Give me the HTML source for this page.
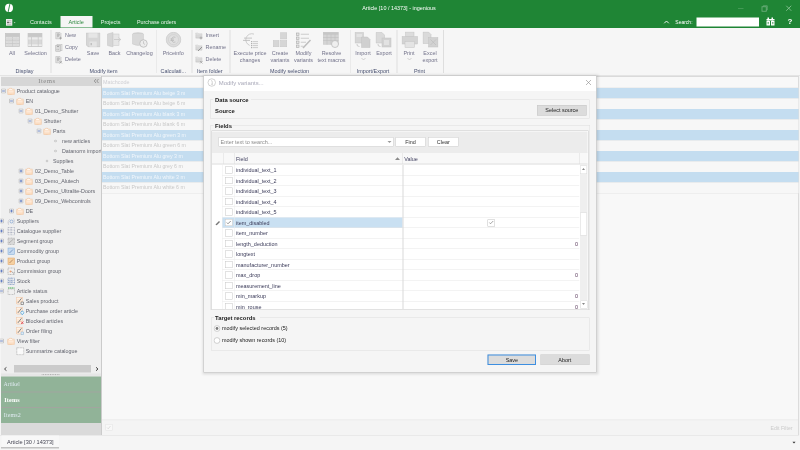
<!DOCTYPE html><html><head><meta charset="utf-8"><style>
html,body{margin:0;padding:0;width:800px;height:450px;overflow:hidden;background:#f5f5f5}
#root{position:absolute;left:0;top:0;width:1600px;height:900px;transform:scale(0.5);transform-origin:0 0;background:#f5f5f5;overflow:hidden;font-family:"Liberation Sans",sans-serif}
#root div{position:absolute;box-sizing:border-box}
.t{white-space:nowrap}
</style></head><body><div id="root">
<div style="left:0px;top:0px;width:1600px;height:55.5px;background:#1f8535"></div>
<svg style="position:absolute;left:7px;top:5px" width="22" height="22" viewBox="0 0 22 22"><ellipse cx="11" cy="10.8" rx="8" ry="8.3" fill="#fff"/><path d="M13 2 L9 20" stroke="#1f8535" stroke-width="1.8"/></svg>
<div class="t" style="left:598px;width:400px;text-align:center;top:9.06px;font-size:10.9px;line-height:13.08px;color:#fff;font-weight:400;">Article [10 / 14373] - ingenious</div>
<div style="left:1476px;top:15.6px;width:11px;height:1.8px;background:#68ad77"></div>
<svg style="position:absolute;left:1520px;top:8px" width="18" height="18" viewBox="0 0 18 18"><rect x="4" y="5.5" width="8.5" height="9" fill="none" stroke="#6fb07e" stroke-width="1.7"/><path d="M6.5 5.5 V3.5 H14.5 V12 H12.5" fill="none" stroke="#6fb07e" stroke-width="1.4"/></svg>
<svg style="position:absolute;left:1569px;top:8px" width="18" height="18" viewBox="0 0 18 18"><path d="M3.5 3.5 L13.5 13.5 M13.5 3.5 L3.5 13.5" stroke="#8cc497" stroke-width="1.7"/></svg>
<svg style="position:absolute;left:8px;top:34px" width="24" height="20" viewBox="0 0 24 20"><rect x="4" y="4" width="12.6" height="13.4" fill="#ececec"/><path d="M6 7.5 H14.5 M6 11 H14.5 M6 14.5 H14.5" stroke="#9a9a9a" stroke-width="1.2"/><rect x="6" y="9.6" width="4" height="2.6" fill="#6a6a6a"/><path d="M19.5 10.5 H23 L21.25 12.5 Z" fill="#dfe8e0"/></svg>
<div class="t" style="left:60px;top:37.40px;font-size:11.0px;line-height:13.20px;color:#e8f3ea;font-weight:400;">Contacts</div>
<div style="left:121px;top:32px;width:64px;height:23px;background:#f5f5f5"></div>
<div class="t" style="left:137px;top:37.40px;font-size:11.0px;line-height:13.20px;color:#2f8a40;font-weight:400;">Article</div>
<div class="t" style="left:201.5px;top:37.40px;font-size:11.0px;line-height:13.20px;color:#e8f3ea;font-weight:400;">Projects</div>
<div class="t" style="left:274px;top:37.58px;font-size:10.7px;line-height:12.84px;color:#e8f3ea;font-weight:400;">Purchase orders</div>
<svg style="position:absolute;left:1326px;top:38px" width="14" height="12" viewBox="0 0 14 12"><path d="M2.5 8.5 L7 4 L11.5 8.5" fill="none" stroke="#fff" stroke-width="1.8"/></svg>
<div class="t" style="left:1350.6px;top:38.00px;font-size:10.0px;line-height:12.00px;color:#fff;font-weight:400;">Search:</div>
<div style="left:1393px;top:34.6px;width:124.6px;height:18.6px;background:#fff"></div>
<svg style="position:absolute;left:1532px;top:34px" width="20" height="18" viewBox="0 0 20 18"><g fill="#fff"><rect x="3" y="1" width="3" height="6"/><rect x="11" y="1" width="3" height="6"/><rect x="1" y="4" width="16" height="3"/><rect x="1" y="8" width="7" height="9"/><rect x="10" y="8" width="7" height="9"/></g><g fill="#1f8535"><rect x="3" y="10" width="3" height="1.2"/><rect x="12" y="10" width="3" height="1.2"/><rect x="3" y="13" width="3" height="1.2"/><rect x="12" y="13" width="3" height="1.2"/><rect x="8" y="2" width="1" height="2"/></g></svg>
<div class="t" style="left:1575px;top:33.40px;font-size:16px;line-height:19.20px;color:#fff;font-weight:700;">?</div>
<div style="left:0px;top:55.5px;width:1600px;height:96.5px;background:#f6f6f6"></div>
<div style="left:0px;top:150.6px;width:1600px;height:2.2px;background:#d2d2d2"></div>
<div style="left:101px;top:60px;width:1.6px;height:86px;background:#dedede"></div>
<div style="left:312.5px;top:60px;width:1.6px;height:86px;background:#dedede"></div>
<div style="left:383px;top:60px;width:1.6px;height:86px;background:#dedede"></div>
<div style="left:459px;top:60px;width:1.6px;height:86px;background:#dedede"></div>
<div style="left:700.5px;top:60px;width:1.6px;height:86px;background:#dedede"></div>
<div style="left:793px;top:60px;width:1.6px;height:86px;background:#dedede"></div>
<div style="left:886px;top:60px;width:1.6px;height:86px;background:#dedede"></div>
<svg style="position:absolute;left:10px;top:65.6px" width="30" height="28" viewBox="0 0 30 28"><rect x="0.8" y="0.8" width="28.4" height="26.4" fill="#dedede" stroke="#c2c2c2" stroke-width="1.4"/><rect x="0.8" y="0.8" width="28.4" height="7" fill="#c8c8c8"/><path d="M15 8 V27 M1 14.5 H29 M1 21 H29" stroke="#c6c6c6" stroke-width="1.4"/><path d="M7.5 8 V27 M22.5 8 V27 M1 11 H29 M1 17.5 H29 M1 24 H29" stroke="#d6d6d6" stroke-width="1"/></svg>
<svg style="position:absolute;left:55.4px;top:65.6px" width="30" height="28" viewBox="0 0 30 28"><rect x="0.8" y="0.8" width="28.4" height="26.4" fill="#dcdcdc" stroke="#c2c2c2" stroke-width="1.4"/><rect x="0.8" y="0.8" width="28.4" height="7" fill="#c8c8c8"/><rect x="1.5" y="9" width="27" height="4" fill="#ececec"/><rect x="1.5" y="22.5" width="27" height="3.5" fill="#ececec"/><path d="M8 8 V27 M21.5 8 V27" stroke="#c6c6c6" stroke-width="1.4"/><path d="M1 14.5 H29 M1 18 H29 M1 21.5 H29" stroke="#d0d0d0" stroke-width="1"/></svg>
<div class="t" style="left:-176px;width:400px;text-align:center;top:100.46px;font-size:10.9px;line-height:13.08px;color:#72728a;font-weight:400;">All</div>
<div class="t" style="left:-129px;width:400px;text-align:center;top:100.46px;font-size:10.9px;line-height:13.08px;color:#72728a;font-weight:400;">Selection</div>
<div class="t" style="left:-151px;width:400px;text-align:center;top:136.46px;font-size:10.9px;line-height:13.08px;color:#485070;font-weight:400;">Display</div>
<svg style="position:absolute;left:110px;top:63px" width="16" height="17" viewBox="0 0 16 17"><path d="M1.5 2 H10 L12 4 V14.5 H1.5 Z" fill="#e2e2e2" stroke="#b4b4b4"/><path d="M4 4 Q8 2 10 6 L8 10 L5 12 Q3 9 4 4Z" fill="#bcbcbc"/><path d="M11 10.5 V16 M8.5 13.2 H14" stroke="#999" stroke-width="1.3"/></svg>
<div class="t" style="left:130px;top:64.46px;font-size:10.9px;line-height:13.08px;color:#72728a;font-weight:400;">New</div>
<svg style="position:absolute;left:110px;top:87px" width="16" height="17" viewBox="0 0 16 17"><rect x="4" y="1.5" width="10" height="13" fill="#e6e6e6" stroke="#bababa"/><rect x="1.5" y="3.5" width="9" height="12" fill="#dadada" stroke="#b0b0b0"/><path d="M4 6 H8 M3.5 12 H4.5 M7 12 H8" stroke="#8a8a8a" stroke-width="1.2"/></svg>
<div class="t" style="left:130px;top:88.46px;font-size:10.9px;line-height:13.08px;color:#72728a;font-weight:400;">Copy</div>
<svg style="position:absolute;left:110px;top:111px" width="16" height="17" viewBox="0 0 16 17"><path d="M1.5 2 H10 L12 4 V14.5 H1.5 Z" fill="#e2e2e2" stroke="#b4b4b4"/><path d="M4 4 Q8 2 10 6 L8 10 L5 12 Q3 9 4 4Z" fill="#bcbcbc"/><path d="M9 11 L14 16 M14 11 L9 16" stroke="#999" stroke-width="1.2"/></svg>
<div class="t" style="left:130px;top:112.46px;font-size:10.9px;line-height:13.08px;color:#72728a;font-weight:400;">Delete</div>
<svg style="position:absolute;left:172px;top:65px" width="29" height="30" viewBox="0 0 29 30"><path d="M0.8 0.8 H27.8 V28.8 H4.5 L0.8 25 Z" fill="#d6d6d6" stroke="#c6c6c6" stroke-width="1.4"/><rect x="5" y="1.5" width="18" height="9" fill="#e6e6e6"/><rect x="7" y="18" width="14.5" height="10.5" fill="#e4e4e4"/><rect x="9" y="21" width="3" height="4.5" fill="#c0c0c0"/></svg>
<div class="t" style="left:-14px;width:400px;text-align:center;top:100.46px;font-size:10.9px;line-height:13.08px;color:#72728a;font-weight:400;">Save</div>
<svg style="position:absolute;left:213px;top:64px" width="32" height="31" viewBox="0 0 32 31"><path d="M2 4 L13 1 V30 L2 27 Z" fill="#d6d6d6" stroke="#c4c4c4"/><rect x="13" y="4" width="12" height="23" fill="#e6e6e6" stroke="#c8c8c8"/><path d="M15 15 H28 M24 11 L28.5 15 L24 19" fill="none" stroke="#c0c0c0" stroke-width="1.3"/></svg>
<div class="t" style="left:29px;width:400px;text-align:center;top:100.46px;font-size:10.9px;line-height:13.08px;color:#72728a;font-weight:400;">Back</div>
<svg style="position:absolute;left:264px;top:64px" width="33" height="32" viewBox="0 0 33 32"><ellipse cx="12" cy="4" rx="11" ry="3.5" fill="#d0d0d0"/><path d="M1 4 V24 Q12 30 23 24 V4" fill="#d9d9d9" stroke="#c8c8c8"/><circle cx="23" cy="23" r="7.5" fill="#ececec" stroke="#b4b4b4" stroke-width="1.4"/><path d="M23 18.5 V23 L26 25" fill="none" stroke="#b0b0b0" stroke-width="1.2"/></svg>
<div class="t" style="left:79px;width:400px;text-align:center;top:100.46px;font-size:10.9px;line-height:13.08px;color:#72728a;font-weight:400;">Changelog</div>
<div class="t" style="left:7px;width:400px;text-align:center;top:136.46px;font-size:10.9px;line-height:13.08px;color:#485070;font-weight:400;">Modify item</div>
<svg style="position:absolute;left:331px;top:63px" width="32" height="33" viewBox="0 0 32 33"><circle cx="16" cy="16.3" r="14.6" fill="#dcdcdc" stroke="#c9c9c9" stroke-width="1.4"/><circle cx="16" cy="16.3" r="10" fill="#e0e0e0" stroke="#cdcdcd" stroke-width="1.2"/><path d="M20 11.5 Q14.5 9 12.5 14 V18.5 Q14.5 23.5 20 21 M10 15 H17 M10 18 H17" fill="none" stroke="#b8b8b8" stroke-width="1.5"/></svg>
<div class="t" style="left:146.5px;width:400px;text-align:center;top:100.46px;font-size:10.9px;line-height:13.08px;color:#72728a;font-weight:400;">Priceinfo</div>
<div class="t" style="left:146.5px;width:400px;text-align:center;top:136.46px;font-size:10.9px;line-height:13.08px;color:#485070;font-weight:400;">Calculati...</div>
<svg style="position:absolute;left:390px;top:63px" width="16" height="17" viewBox="0 0 16 17"><path d="M1.5 3 H6 L7.5 4.5 H14 V13.5 H1.5 Z" fill="#e8e8e8" stroke="#b8b8b8" stroke-dasharray="1.5 0.7"/><path d="M2 7 H13.5 M2 9.5 H13.5 M2 12 H13.5" stroke="#c0c0c0" stroke-width="1.1"/><path d="M12 10 V16 M9 13 H15" stroke="#999" stroke-width="1.3"/></svg>
<div class="t" style="left:411px;top:64.46px;font-size:10.9px;line-height:13.08px;color:#72728a;font-weight:400;">Insert</div>
<svg style="position:absolute;left:390px;top:87px" width="16" height="17" viewBox="0 0 16 17"><path d="M1.5 3 H6 L7.5 4.5 H14 V13.5 H1.5 Z" fill="#e8e8e8" stroke="#b8b8b8" stroke-dasharray="1.5 0.7"/><path d="M2 7 H13.5 M2 9.5 H13.5 M2 12 H13.5" stroke="#c0c0c0" stroke-width="1.1"/><path d="M6 15 L14 7" stroke="#8a8a8a" stroke-width="1.8"/></svg>
<div class="t" style="left:411px;top:88.46px;font-size:10.9px;line-height:13.08px;color:#72728a;font-weight:400;">Rename</div>
<svg style="position:absolute;left:390px;top:111px" width="16" height="17" viewBox="0 0 16 17"><path d="M1.5 3 H6 L7.5 4.5 H14 V13.5 H1.5 Z" fill="#e8e8e8" stroke="#b8b8b8" stroke-dasharray="1.5 0.7"/><path d="M2 7 H13.5 M2 9.5 H13.5 M2 12 H13.5" stroke="#c0c0c0" stroke-width="1.1"/><path d="M10 11 L15 16 M15 11 L10 16" stroke="#999" stroke-width="1.2"/></svg>
<div class="t" style="left:411px;top:112.46px;font-size:10.9px;line-height:13.08px;color:#72728a;font-weight:400;">Delete</div>
<div class="t" style="left:219.5px;width:400px;text-align:center;top:136.46px;font-size:10.9px;line-height:13.08px;color:#485070;font-weight:400;">Item folder</div>
<svg style="position:absolute;left:484px;top:64px" width="34" height="34" viewBox="0 0 34 34"><path d="M24 4.2 A12 12 0 1 0 15.4 26.8" fill="none" stroke="#c2c2c2" stroke-width="1.6"/><path d="M4 12.2 H20 M2 16.8 H16" stroke="#b8b8b8" stroke-width="1.6"/><g fill="#b0b0b0"><rect x="18" y="18" width="2.4" height="2.4"/><rect x="18" y="22" width="2.4" height="2.4"/><rect x="18" y="26" width="2.4" height="2.4"/><rect x="18" y="30" width="2.4" height="2.4"/></g><path d="M21.5 19.2 H32 M21.5 23.2 H32 M21.5 27.2 H32 M21.5 31.2 H32" stroke="#c0c0c0" stroke-width="1.6"/></svg>
<div class="t" style="left:300px;width:400px;text-align:center;top:100.46px;font-size:10.9px;line-height:13.08px;color:#72728a;font-weight:400;">Execute price</div>
<div class="t" style="left:300px;width:400px;text-align:center;top:112.96px;font-size:10.9px;line-height:13.08px;color:#72728a;font-weight:400;">changes</div>
<svg style="position:absolute;left:545px;top:64px" width="30" height="31" viewBox="0 0 30 31"><g fill="#d6d6d6" stroke="#c6c6c6" stroke-width="1"><rect x="1.5" y="17" width="11.5" height="12.5"/><rect x="16" y="17" width="12.5" height="12.5"/><rect x="16" y="1.5" width="12.5" height="12.5"/></g></svg>
<div class="t" style="left:360px;width:400px;text-align:center;top:100.46px;font-size:10.9px;line-height:13.08px;color:#72728a;font-weight:400;">Create</div>
<div class="t" style="left:360px;width:400px;text-align:center;top:112.96px;font-size:10.9px;line-height:13.08px;color:#72728a;font-weight:400;">variants</div>
<svg style="position:absolute;left:591px;top:64px" width="32" height="34" viewBox="0 0 32 34"><g fill="#e4e4e4" stroke="#a8a8a8" stroke-width="1.2"><rect x="2" y="2" width="5" height="5"/><rect x="2" y="10" width="5" height="5"/><rect x="2" y="18" width="5" height="5"/><rect x="2" y="26" width="5" height="5"/></g><path d="M10.5 4.5 H27 M10.5 12.5 H27 M10.5 20.5 H21 M10.5 28.5 H16" stroke="#bdbdbd" stroke-width="1.5"/><path d="M15 32 L30 16" stroke="#bdbdbd" stroke-width="3"/></svg>
<div class="t" style="left:407px;width:400px;text-align:center;top:100.46px;font-size:10.9px;line-height:13.08px;color:#72728a;font-weight:400;">Modify</div>
<div class="t" style="left:407px;width:400px;text-align:center;top:112.96px;font-size:10.9px;line-height:13.08px;color:#72728a;font-weight:400;">variants</div>
<svg style="position:absolute;left:646px;top:64px" width="34" height="32" viewBox="0 0 34 32"><rect x="0.5" y="0.5" width="30" height="24" fill="#d4d4d4" stroke="#c6c6c6"/><rect x="0.5" y="0.5" width="30" height="5" fill="#c6c6c6"/><path d="M0 11 H31 M0 17 H31 M8 5 V25 M16 5 V25 M24 5 V25" stroke="#bdbdbd"/><circle cx="24" cy="24" r="7" fill="#efefef" stroke="#bdbdbd" stroke-width="1.6"/></svg>
<div class="t" style="left:463px;width:400px;text-align:center;top:100.46px;font-size:10.9px;line-height:13.08px;color:#72728a;font-weight:400;">Resolve</div>
<div class="t" style="left:463px;width:400px;text-align:center;top:112.96px;font-size:10.9px;line-height:13.08px;color:#72728a;font-weight:400;">text macros</div>
<div class="t" style="left:379px;width:400px;text-align:center;top:136.46px;font-size:10.9px;line-height:13.08px;color:#485070;font-weight:400;">Modify selection</div>
<svg style="position:absolute;left:709px;top:64px" width="33" height="32" viewBox="0 0 33 32"><rect x="1" y="1" width="17" height="21" fill="#d6d6d6" stroke="#c3c3c3"/><rect x="4" y="4" width="11" height="6" fill="#e4e4e4"/><path d="M14 10 H26 L31 15 V31 H14 Z" fill="#d0d0d0" stroke="#c3c3c3"/><path d="M5 24 Q4 29 10 29" fill="none" stroke="#b8b8b8" stroke-width="1.3"/></svg>
<div class="t" style="left:526px;width:400px;text-align:center;top:100.46px;font-size:10.9px;line-height:13.08px;color:#72728a;font-weight:400;">Import</div>
<svg style="position:absolute;left:722px;top:115px" width="10" height="6" viewBox="0 0 10 6"><path d="M1 1 L5 5 L9 1" fill="none" stroke="#b8b8b8" stroke-width="1.2"/></svg>
<svg style="position:absolute;left:751px;top:64px" width="33" height="32" viewBox="0 0 33 32"><path d="M1 1 H13 L18 6 V22 H1 Z" fill="#dadada" stroke="#c3c3c3"/><rect x="13" y="12" width="18" height="18" fill="#d2d2d2" stroke="#c3c3c3"/><rect x="17" y="16" width="10" height="10" fill="#e2e2e2"/><path d="M5 24 Q4 29 10 29" fill="none" stroke="#b8b8b8" stroke-width="1.3"/></svg>
<div class="t" style="left:568px;width:400px;text-align:center;top:100.46px;font-size:10.9px;line-height:13.08px;color:#72728a;font-weight:400;">Export</div>
<div class="t" style="left:546px;width:400px;text-align:center;top:136.46px;font-size:10.9px;line-height:13.08px;color:#485070;font-weight:400;">Import/Export</div>
<svg style="position:absolute;left:803px;top:63px" width="33" height="33" viewBox="0 0 33 33"><rect x="8" y="1" width="17" height="9" fill="#dcdcdc" stroke="#c3c3c3"/><rect x="1" y="10" width="31" height="15" fill="#d4d4d4" stroke="#c3c3c3"/><rect x="7" y="20" width="19" height="12" fill="#e4e4e4" stroke="#c3c3c3"/></svg>
<div class="t" style="left:618px;width:400px;text-align:center;top:100.46px;font-size:10.9px;line-height:13.08px;color:#72728a;font-weight:400;">Print</div>
<svg style="position:absolute;left:814px;top:115px" width="10" height="6" viewBox="0 0 10 6"><path d="M1 1 L5 5 L9 1" fill="none" stroke="#b8b8b8" stroke-width="1.2"/></svg>
<svg style="position:absolute;left:845px;top:63px" width="32" height="33" viewBox="0 0 32 33"><path d="M1 1 H12 L17 6 V24 H1 Z" fill="#dadada" stroke="#c3c3c3"/><rect x="12" y="12" width="19" height="19" fill="#d2d2d2" stroke="#c3c3c3"/><path d="M16 16 L27 27 M27 16 L16 27" stroke="#bdbdbd" stroke-width="1.3"/></svg>
<div class="t" style="left:660px;width:400px;text-align:center;top:100.46px;font-size:10.9px;line-height:13.08px;color:#72728a;font-weight:400;">Excel</div>
<div class="t" style="left:660px;width:400px;text-align:center;top:112.96px;font-size:10.9px;line-height:13.08px;color:#72728a;font-weight:400;">export</div>
<div class="t" style="left:639px;width:400px;text-align:center;top:136.46px;font-size:10.9px;line-height:13.08px;color:#485070;font-weight:400;">Print</div>
<div style="left:0px;top:152px;width:2px;height:718px;background:#f5f5f5"></div>
<div style="left:2px;top:152px;width:201px;height:718px;background:#efefef"></div>
<div style="left:2px;top:154px;width:201px;height:18px;background:#d6d6d6"></div>
<div class="t" style="left:-106px;width:400px;text-align:center;top:154.30px;font-size:13.5px;line-height:16.20px;color:#8a8a8a;font-weight:400;font-family:&quot;Liberation Serif&quot;,serif;letter-spacing:1px">Items</div>
<svg style="position:absolute;left:186px;top:155px" width="14" height="14" viewBox="0 0 14 14"><path d="M6 3 L2.5 7 L6 11 M11 3 L7.5 7 L11 11" fill="none" stroke="#6a6a6a" stroke-width="1.2"/></svg>
<svg style="position:absolute;left:2px;top:177px" width="10" height="10" viewBox="0 0 10 10"><rect x="0.75" y="0.75" width="8.5" height="8.5" rx="1.2" fill="#f2f2f2" stroke="#a4a4a4" stroke-width="1.2"/><path d="M2.2 5 H7.8" stroke="#4a68b8" stroke-width="1.5"/></svg>
<svg style="position:absolute;left:14px;top:175px" width="16" height="15" viewBox="0 0 16 15"><path d="M1.5 3.5 H4 L5.5 1.5 H9 L10.5 3.5 H14.5 V14 H1.5 Z" fill="#fff6ee" stroke="#f0ab72" stroke-width="1.3" stroke-dasharray="1.6 0.7"/><path d="M2 6.5 H14 M2 9.5 H14 M2 12 H14" stroke="#f8cda4" stroke-width="1.2"/></svg>
<div class="t" style="left:33.5px;top:175.58px;font-size:10.7px;line-height:12.84px;color:#62646e;font-weight:400;">Product catalogue</div>
<svg style="position:absolute;left:18px;top:197px" width="10" height="10" viewBox="0 0 10 10"><rect x="0.75" y="0.75" width="8.5" height="8.5" rx="1.2" fill="#f2f2f2" stroke="#a4a4a4" stroke-width="1.2"/><path d="M2.2 5 H7.8" stroke="#4a68b8" stroke-width="1.5"/></svg>
<svg style="position:absolute;left:32px;top:195px" width="16" height="15" viewBox="0 0 16 15"><path d="M1.5 3.5 H4 L5.5 1.5 H9 L10.5 3.5 H14.5 V14 H1.5 Z" fill="#fff6ee" stroke="#f0ab72" stroke-width="1.3" stroke-dasharray="1.6 0.7"/><path d="M2 6.5 H14 M2 9.5 H14 M2 12 H14" stroke="#f8cda4" stroke-width="1.2"/></svg>
<div class="t" style="left:51.5px;top:195.58px;font-size:10.7px;line-height:12.84px;color:#62646e;font-weight:400;">EN</div>
<svg style="position:absolute;left:37px;top:217px" width="10" height="10" viewBox="0 0 10 10"><rect x="0.75" y="0.75" width="8.5" height="8.5" rx="1.2" fill="#f2f2f2" stroke="#a4a4a4" stroke-width="1.2"/><path d="M2.2 5 H7.8" stroke="#4a68b8" stroke-width="1.5"/></svg>
<svg style="position:absolute;left:50px;top:215px" width="16" height="15" viewBox="0 0 16 15"><path d="M1.5 3.5 H4 L5.5 1.5 H9 L10.5 3.5 H14.5 V14 H1.5 Z" fill="#fff6ee" stroke="#f0ab72" stroke-width="1.3" stroke-dasharray="1.6 0.7"/><path d="M2 6.5 H14 M2 9.5 H14 M2 12 H14" stroke="#f8cda4" stroke-width="1.2"/></svg>
<div class="t" style="left:70px;top:215.58px;font-size:10.7px;line-height:12.84px;color:#62646e;font-weight:400;">01_Demo_Shutter</div>
<svg style="position:absolute;left:55px;top:237px" width="10" height="10" viewBox="0 0 10 10"><rect x="0.75" y="0.75" width="8.5" height="8.5" rx="1.2" fill="#f2f2f2" stroke="#a4a4a4" stroke-width="1.2"/><path d="M2.2 5 H7.8" stroke="#4a68b8" stroke-width="1.5"/></svg>
<svg style="position:absolute;left:68px;top:235px" width="16" height="15" viewBox="0 0 16 15"><path d="M1.5 3.5 H4 L5.5 1.5 H9 L10.5 3.5 H14.5 V14 H1.5 Z" fill="#fff6ee" stroke="#f0ab72" stroke-width="1.3" stroke-dasharray="1.6 0.7"/><path d="M2 6.5 H14 M2 9.5 H14 M2 12 H14" stroke="#f8cda4" stroke-width="1.2"/></svg>
<div class="t" style="left:88px;top:235.58px;font-size:10.7px;line-height:12.84px;color:#62646e;font-weight:400;">Shutter</div>
<svg style="position:absolute;left:73px;top:257px" width="10" height="10" viewBox="0 0 10 10"><rect x="0.75" y="0.75" width="8.5" height="8.5" rx="1.2" fill="#f2f2f2" stroke="#a4a4a4" stroke-width="1.2"/><path d="M2.2 5 H7.8" stroke="#4a68b8" stroke-width="1.5"/></svg>
<svg style="position:absolute;left:86px;top:255px" width="16" height="15" viewBox="0 0 16 15"><path d="M1.5 3.5 H4 L5.5 1.5 H9 L10.5 3.5 H14.5 V14 H1.5 Z" fill="#fff6ee" stroke="#f0ab72" stroke-width="1.3" stroke-dasharray="1.6 0.7"/><path d="M2 6.5 H14 M2 9.5 H14 M2 12 H14" stroke="#f8cda4" stroke-width="1.2"/></svg>
<div class="t" style="left:106px;top:255.58px;font-size:10.7px;line-height:12.84px;color:#62646e;font-weight:400;">Parts</div>
<svg style="position:absolute;left:108px;top:279px" width="6" height="6" viewBox="0 0 6 6"><circle cx="3" cy="3" r="2" fill="none" stroke="#a0a0a0" stroke-width="1"/></svg>
<div class="t" style="left:124px;top:275.58px;font-size:10.7px;line-height:12.84px;color:#62646e;font-weight:400;">new articles</div>
<svg style="position:absolute;left:108px;top:299px" width="6" height="6" viewBox="0 0 6 6"><circle cx="3" cy="3" r="2" fill="none" stroke="#a0a0a0" stroke-width="1"/></svg>
<div class="t" style="left:124px;top:295.58px;font-size:10.7px;line-height:12.84px;color:#62646e;font-weight:400;">Datanorm import</div>
<svg style="position:absolute;left:91px;top:319px" width="6" height="6" viewBox="0 0 6 6"><circle cx="3" cy="3" r="2" fill="none" stroke="#a0a0a0" stroke-width="1"/></svg>
<div class="t" style="left:106px;top:315.58px;font-size:10.7px;line-height:12.84px;color:#62646e;font-weight:400;">Supplies</div>
<svg style="position:absolute;left:37px;top:337px" width="10" height="10" viewBox="0 0 10 10"><rect x="0.75" y="0.75" width="8.5" height="8.5" rx="1.2" fill="#f2f2f2" stroke="#a4a4a4" stroke-width="1.2"/><path d="M2.2 5 H7.8" stroke="#4a68b8" stroke-width="1.5"/><path d="M5 2.2 V7.8" stroke="#4a68b8" stroke-width="1.5"/></svg>
<svg style="position:absolute;left:50px;top:335px" width="16" height="15" viewBox="0 0 16 15"><path d="M1.5 3.5 H4 L5.5 1.5 H9 L10.5 3.5 H14.5 V14 H1.5 Z" fill="#fff6ee" stroke="#f0ab72" stroke-width="1.3" stroke-dasharray="1.6 0.7"/><path d="M2 6.5 H14 M2 9.5 H14 M2 12 H14" stroke="#f8cda4" stroke-width="1.2"/></svg>
<div class="t" style="left:70px;top:335.58px;font-size:10.7px;line-height:12.84px;color:#62646e;font-weight:400;">02_Demo_Table</div>
<svg style="position:absolute;left:37px;top:357px" width="10" height="10" viewBox="0 0 10 10"><rect x="0.75" y="0.75" width="8.5" height="8.5" rx="1.2" fill="#f2f2f2" stroke="#a4a4a4" stroke-width="1.2"/><path d="M2.2 5 H7.8" stroke="#4a68b8" stroke-width="1.5"/><path d="M5 2.2 V7.8" stroke="#4a68b8" stroke-width="1.5"/></svg>
<svg style="position:absolute;left:50px;top:355px" width="16" height="15" viewBox="0 0 16 15"><path d="M1.5 3.5 H4 L5.5 1.5 H9 L10.5 3.5 H14.5 V14 H1.5 Z" fill="#fff6ee" stroke="#f0ab72" stroke-width="1.3" stroke-dasharray="1.6 0.7"/><path d="M2 6.5 H14 M2 9.5 H14 M2 12 H14" stroke="#f8cda4" stroke-width="1.2"/></svg>
<div class="t" style="left:70px;top:355.58px;font-size:10.7px;line-height:12.84px;color:#62646e;font-weight:400;">03_Demo_Alutech</div>
<svg style="position:absolute;left:37px;top:377px" width="10" height="10" viewBox="0 0 10 10"><rect x="0.75" y="0.75" width="8.5" height="8.5" rx="1.2" fill="#f2f2f2" stroke="#a4a4a4" stroke-width="1.2"/><path d="M2.2 5 H7.8" stroke="#4a68b8" stroke-width="1.5"/><path d="M5 2.2 V7.8" stroke="#4a68b8" stroke-width="1.5"/></svg>
<svg style="position:absolute;left:50px;top:375px" width="16" height="15" viewBox="0 0 16 15"><path d="M1.5 3.5 H4 L5.5 1.5 H9 L10.5 3.5 H14.5 V14 H1.5 Z" fill="#fff6ee" stroke="#f0ab72" stroke-width="1.3" stroke-dasharray="1.6 0.7"/><path d="M2 6.5 H14 M2 9.5 H14 M2 12 H14" stroke="#f8cda4" stroke-width="1.2"/></svg>
<div class="t" style="left:70px;top:375.58px;font-size:10.7px;line-height:12.84px;color:#62646e;font-weight:400;">04_Demo_Ultralite-Doors</div>
<svg style="position:absolute;left:37px;top:397px" width="10" height="10" viewBox="0 0 10 10"><rect x="0.75" y="0.75" width="8.5" height="8.5" rx="1.2" fill="#f2f2f2" stroke="#a4a4a4" stroke-width="1.2"/><path d="M2.2 5 H7.8" stroke="#4a68b8" stroke-width="1.5"/><path d="M5 2.2 V7.8" stroke="#4a68b8" stroke-width="1.5"/></svg>
<svg style="position:absolute;left:50px;top:395px" width="16" height="15" viewBox="0 0 16 15"><path d="M1.5 3.5 H4 L5.5 1.5 H9 L10.5 3.5 H14.5 V14 H1.5 Z" fill="#fff6ee" stroke="#f0ab72" stroke-width="1.3" stroke-dasharray="1.6 0.7"/><path d="M2 6.5 H14 M2 9.5 H14 M2 12 H14" stroke="#f8cda4" stroke-width="1.2"/></svg>
<div class="t" style="left:70px;top:395.58px;font-size:10.7px;line-height:12.84px;color:#62646e;font-weight:400;">09_Demo_Webcontrols</div>
<svg style="position:absolute;left:18px;top:417px" width="10" height="10" viewBox="0 0 10 10"><rect x="0.75" y="0.75" width="8.5" height="8.5" rx="1.2" fill="#f2f2f2" stroke="#a4a4a4" stroke-width="1.2"/><path d="M2.2 5 H7.8" stroke="#4a68b8" stroke-width="1.5"/><path d="M5 2.2 V7.8" stroke="#4a68b8" stroke-width="1.5"/></svg>
<svg style="position:absolute;left:32px;top:415px" width="16" height="15" viewBox="0 0 16 15"><path d="M1.5 3.5 H4 L5.5 1.5 H9 L10.5 3.5 H14.5 V14 H1.5 Z" fill="#fff6ee" stroke="#f0ab72" stroke-width="1.3" stroke-dasharray="1.6 0.7"/><path d="M2 6.5 H14 M2 9.5 H14 M2 12 H14" stroke="#f8cda4" stroke-width="1.2"/></svg>
<div class="t" style="left:51.5px;top:415.58px;font-size:10.7px;line-height:12.84px;color:#62646e;font-weight:400;">DE</div>
<svg style="position:absolute;left:-2px;top:437px" width="10" height="10" viewBox="0 0 10 10"><rect x="0.75" y="0.75" width="8.5" height="8.5" rx="1.2" fill="#f2f2f2" stroke="#a4a4a4" stroke-width="1.2"/><path d="M2.2 5 H7.8" stroke="#4a68b8" stroke-width="1.5"/><path d="M5 2.2 V7.8" stroke="#4a68b8" stroke-width="1.5"/></svg>
<svg style="position:absolute;left:14px;top:434px" width="17" height="17" viewBox="0 0 17 17"><path d="M3 15 Q1 8 5 5 M13 3 Q16 8 13 15" fill="none" stroke="#9aa0b0" stroke-width="1.2" stroke-dasharray="2 1"/><circle cx="9" cy="9" r="3" fill="none" stroke="#6a90c8" stroke-width="1.2"/></svg>
<div class="t" style="left:33.5px;top:435.58px;font-size:10.7px;line-height:12.84px;color:#62646e;font-weight:400;">Suppliers</div>
<svg style="position:absolute;left:-2px;top:457px" width="10" height="10" viewBox="0 0 10 10"><rect x="0.75" y="0.75" width="8.5" height="8.5" rx="1.2" fill="#f2f2f2" stroke="#a4a4a4" stroke-width="1.2"/><path d="M2.2 5 H7.8" stroke="#4a68b8" stroke-width="1.5"/><path d="M5 2.2 V7.8" stroke="#4a68b8" stroke-width="1.5"/></svg>
<svg style="position:absolute;left:14px;top:454px" width="17" height="17" viewBox="0 0 17 17"><g fill="none" stroke="#8a93a8" stroke-width="1" stroke-dasharray="2 1"><rect x="2" y="1" width="13" height="15"/><path d="M2 6 H15 M2 11 H15 M8 1 V16"/></g></svg>
<div class="t" style="left:33.5px;top:455.58px;font-size:10.7px;line-height:12.84px;color:#62646e;font-weight:400;">Catalogue supplier</div>
<svg style="position:absolute;left:-2px;top:477px" width="10" height="10" viewBox="0 0 10 10"><rect x="0.75" y="0.75" width="8.5" height="8.5" rx="1.2" fill="#f2f2f2" stroke="#a4a4a4" stroke-width="1.2"/><path d="M2.2 5 H7.8" stroke="#4a68b8" stroke-width="1.5"/><path d="M5 2.2 V7.8" stroke="#4a68b8" stroke-width="1.5"/></svg>
<svg style="position:absolute;left:14px;top:474px" width="17" height="17" viewBox="0 0 17 17"><g fill="#d8d8d8" stroke="#9a9a9a" stroke-width="1" stroke-dasharray="2 1"><rect x="2" y="2" width="13" height="13"/></g><path d="M4 12 L13 4" stroke="#888"/></svg>
<div class="t" style="left:33.5px;top:475.58px;font-size:10.7px;line-height:12.84px;color:#62646e;font-weight:400;">Segment group</div>
<svg style="position:absolute;left:-2px;top:497px" width="10" height="10" viewBox="0 0 10 10"><rect x="0.75" y="0.75" width="8.5" height="8.5" rx="1.2" fill="#f2f2f2" stroke="#a4a4a4" stroke-width="1.2"/><path d="M2.2 5 H7.8" stroke="#4a68b8" stroke-width="1.5"/><path d="M5 2.2 V7.8" stroke="#4a68b8" stroke-width="1.5"/></svg>
<svg style="position:absolute;left:14px;top:494px" width="17" height="17" viewBox="0 0 17 17"><rect x="2" y="2" width="13" height="13" fill="#c6daf0" stroke="#7aa8d8"/><path d="M5 12 L12 5" stroke="#4a70a8" stroke-width="1.2"/></svg>
<div class="t" style="left:33.5px;top:495.58px;font-size:10.7px;line-height:12.84px;color:#62646e;font-weight:400;">Commodity group</div>
<svg style="position:absolute;left:-2px;top:517px" width="10" height="10" viewBox="0 0 10 10"><rect x="0.75" y="0.75" width="8.5" height="8.5" rx="1.2" fill="#f2f2f2" stroke="#a4a4a4" stroke-width="1.2"/><path d="M2.2 5 H7.8" stroke="#4a68b8" stroke-width="1.5"/><path d="M5 2.2 V7.8" stroke="#4a68b8" stroke-width="1.5"/></svg>
<svg style="position:absolute;left:14px;top:514px" width="17" height="17" viewBox="0 0 17 17"><rect x="2" y="2" width="13" height="13" fill="#f5d0a0" stroke="#e0a060"/><path d="M5 12 L12 5" stroke="#906040" stroke-width="1.2"/></svg>
<div class="t" style="left:33.5px;top:515.58px;font-size:10.7px;line-height:12.84px;color:#62646e;font-weight:400;">Product group</div>
<svg style="position:absolute;left:-2px;top:537px" width="10" height="10" viewBox="0 0 10 10"><rect x="0.75" y="0.75" width="8.5" height="8.5" rx="1.2" fill="#f2f2f2" stroke="#a4a4a4" stroke-width="1.2"/><path d="M2.2 5 H7.8" stroke="#4a68b8" stroke-width="1.5"/><path d="M5 2.2 V7.8" stroke="#4a68b8" stroke-width="1.5"/></svg>
<svg style="position:absolute;left:14px;top:534px" width="17" height="17" viewBox="0 0 17 17"><g fill="none" stroke="#8a8a8a" stroke-width="1" stroke-dasharray="2 1"><rect x="2" y="2" width="13" height="13"/></g><circle cx="7" cy="9" r="2" fill="#f0a070"/><path d="M9 9 L14 13" stroke="#666"/></svg>
<div class="t" style="left:33.5px;top:535.58px;font-size:10.7px;line-height:12.84px;color:#62646e;font-weight:400;">Commission group</div>
<svg style="position:absolute;left:-2px;top:557px" width="10" height="10" viewBox="0 0 10 10"><rect x="0.75" y="0.75" width="8.5" height="8.5" rx="1.2" fill="#f2f2f2" stroke="#a4a4a4" stroke-width="1.2"/><path d="M2.2 5 H7.8" stroke="#4a68b8" stroke-width="1.5"/><path d="M5 2.2 V7.8" stroke="#4a68b8" stroke-width="1.5"/></svg>
<svg style="position:absolute;left:14px;top:554px" width="17" height="17" viewBox="0 0 17 17"><g fill="none" stroke="#5a7ab0" stroke-width="1" stroke-dasharray="2 1"><rect x="2" y="2" width="13" height="13"/><path d="M2 7 H15 M2 11 H15 M6 2 V15 M10 2 V15"/></g></svg>
<div class="t" style="left:33.5px;top:555.58px;font-size:10.7px;line-height:12.84px;color:#62646e;font-weight:400;">Stock</div>
<svg style="position:absolute;left:-2px;top:577px" width="10" height="10" viewBox="0 0 10 10"><rect x="0.75" y="0.75" width="8.5" height="8.5" rx="1.2" fill="#f2f2f2" stroke="#a4a4a4" stroke-width="1.2"/><path d="M2.2 5 H7.8" stroke="#4a68b8" stroke-width="1.5"/></svg>
<svg style="position:absolute;left:14px;top:574px" width="17" height="17" viewBox="0 0 17 17"><path d="M2 2 H15" stroke="#40b050" stroke-width="2" stroke-dasharray="3 1"/><g fill="none" stroke="#9a9a9a" stroke-width="1" stroke-dasharray="2 1"><rect x="2" y="4" width="13" height="11"/></g></svg>
<div class="t" style="left:33.5px;top:575.58px;font-size:10.7px;line-height:12.84px;color:#62646e;font-weight:400;">Article status</div>
<svg style="position:absolute;left:31px;top:593px" width="18" height="18" viewBox="0 0 18 18"><rect x="2" y="2" width="12" height="13" fill="#fdf1e6" stroke="#f0b080" stroke-width="1.2" stroke-dasharray="1.5 0.8"/><path d="M3 7 H13 M3 10 H13" stroke="#f6cfa8"/><path d="M4.5 13 L12 3.5" stroke="#7a7a7a" stroke-width="1.8"/><path d="M11 11 L16 11 L16 16 L11 16 Z" fill="#f0f0f0" stroke="#666" stroke-width="1.2"/></svg>
<div class="t" style="left:51.5px;top:595.58px;font-size:10.7px;line-height:12.84px;color:#62646e;font-weight:400;">Sales product</div>
<svg style="position:absolute;left:31px;top:613px" width="18" height="18" viewBox="0 0 18 18"><rect x="2" y="2" width="12" height="13" fill="#fdf1e6" stroke="#f0b080" stroke-width="1.2" stroke-dasharray="1.5 0.8"/><path d="M3 7 H13 M3 10 H13" stroke="#f6cfa8"/><path d="M4.5 13 L12 3.5" stroke="#7a7a7a" stroke-width="1.8"/><path d="M13.5 8.5 L17 12.5 L13.5 16.5 L10 12.5 Z" fill="#e8f4fc" stroke="#3a9ad8" stroke-width="1.4"/></svg>
<div class="t" style="left:51.5px;top:615.58px;font-size:10.7px;line-height:12.84px;color:#62646e;font-weight:400;">Purchase order article</div>
<svg style="position:absolute;left:31px;top:633px" width="18" height="18" viewBox="0 0 18 18"><rect x="2" y="2" width="12" height="13" fill="#fdf1e6" stroke="#f0b080" stroke-width="1.2" stroke-dasharray="1.5 0.8"/><path d="M3 7 H13 M3 10 H13" stroke="#f6cfa8"/><path d="M4.5 13 L12 3.5" stroke="#7a7a7a" stroke-width="1.8"/><path d="M11 10 L16 15 M16 10 L11 15" stroke="#e04858" stroke-width="1.6"/></svg>
<div class="t" style="left:51.5px;top:635.58px;font-size:10.7px;line-height:12.84px;color:#62646e;font-weight:400;">Blocked articles</div>
<svg style="position:absolute;left:31px;top:653px" width="18" height="18" viewBox="0 0 18 18"><rect x="2" y="2" width="12" height="13" fill="#fdf1e6" stroke="#f0b080" stroke-width="1.2" stroke-dasharray="1.5 0.8"/><path d="M3 7 H13 M3 10 H13" stroke="#f6cfa8"/><path d="M4.5 13 L12 3.5" stroke="#7a7a7a" stroke-width="1.8"/><path d="M11 11 L16 11 L16 16 L11 16 Z" fill="#dceaf6" stroke="#8ab0d0" stroke-width="1"/></svg>
<div class="t" style="left:51.5px;top:655.58px;font-size:10.7px;line-height:12.84px;color:#62646e;font-weight:400;">Order filing</div>
<svg style="position:absolute;left:-2px;top:677px" width="10" height="10" viewBox="0 0 10 10"><rect x="0.75" y="0.75" width="8.5" height="8.5" rx="1.2" fill="#f2f2f2" stroke="#a4a4a4" stroke-width="1.2"/><path d="M2.2 5 H7.8" stroke="#4a68b8" stroke-width="1.5"/></svg>
<svg style="position:absolute;left:14px;top:675px" width="16" height="15" viewBox="0 0 16 15"><path d="M1.5 3.5 H4 L5.5 1.5 H9 L10.5 3.5 H14.5 V14 H1.5 Z" fill="#fff6ee" stroke="#f0ab72" stroke-width="1.3" stroke-dasharray="1.6 0.7"/><path d="M2 6.5 H14 M2 9.5 H14 M2 12 H14" stroke="#f8cda4" stroke-width="1.2"/></svg>
<div class="t" style="left:33.5px;top:675.58px;font-size:10.7px;line-height:12.84px;color:#62646e;font-weight:400;">View filter</div>
<svg style="position:absolute;left:32px;top:694px" width="17" height="17" viewBox="0 0 17 17"><rect x="1.5" y="1.5" width="14" height="14" fill="#fafafa" stroke="#909090" stroke-dasharray="2 1"/></svg>
<div class="t" style="left:51.5px;top:695.58px;font-size:10.7px;line-height:12.84px;color:#62646e;font-weight:400;">Summarize catalogue</div>
<div style="left:2px;top:730px;width:201px;height:16px;background:#efefef"></div>
<div style="left:28.4px;top:730.4px;width:153.4px;height:15px;background:#cbcbcb"></div>
<svg style="position:absolute;left:6px;top:733px" width="10" height="10" viewBox="0 0 10 10"><path d="M7 1.5 L3 5 L7 8.5" fill="none" stroke="#4a4a4a" stroke-width="2"/></svg>
<svg style="position:absolute;left:189px;top:733px" width="10" height="10" viewBox="0 0 10 10"><path d="M3 1.5 L7 5 L3 8.5" fill="none" stroke="#4a4a4a" stroke-width="2"/></svg>
<div style="left:2px;top:746.8px;width:201px;height:6.4px;background:#e6e6e6"></div>
<svg style="position:absolute;left:83px;top:748px" width="38" height="3" viewBox="0 0 38 3"><rect x="0.0" y="0.5" width="1.8" height="1.8" fill="#9a9a9a"/><rect x="3.4" y="0.5" width="1.8" height="1.8" fill="#9a9a9a"/><rect x="6.8" y="0.5" width="1.8" height="1.8" fill="#9a9a9a"/><rect x="10.2" y="0.5" width="1.8" height="1.8" fill="#9a9a9a"/><rect x="13.6" y="0.5" width="1.8" height="1.8" fill="#9a9a9a"/><rect x="17.0" y="0.5" width="1.8" height="1.8" fill="#9a9a9a"/><rect x="20.4" y="0.5" width="1.8" height="1.8" fill="#9a9a9a"/><rect x="23.8" y="0.5" width="1.8" height="1.8" fill="#9a9a9a"/><rect x="27.2" y="0.5" width="1.8" height="1.8" fill="#9a9a9a"/><rect x="30.599999999999998" y="0.5" width="1.8" height="1.8" fill="#9a9a9a"/><rect x="34.0" y="0.5" width="1.8" height="1.8" fill="#9a9a9a"/></svg>
<div style="left:2px;top:753px;width:202px;height:93px;background:#91b398"></div>
<div style="left:2px;top:783px;width:202px;height:1.8px;background:#a2a59f"></div>
<div style="left:2px;top:814px;width:202px;height:1.8px;background:#a2a59f"></div>
<div class="t" style="left:7.5px;top:761.64px;font-size:10.6px;line-height:12.72px;color:#dfeaf0;font-weight:400;font-family:&quot;Liberation Serif&quot;,serif;letter-spacing:0.3px">Artikel</div>
<div class="t" style="left:8.5px;top:792.18px;font-size:12.2px;line-height:14.64px;color:#ffffff;font-weight:700;font-family:&quot;Liberation Serif&quot;,serif;letter-spacing:0.4px">Items</div>
<div class="t" style="left:7.5px;top:823.30px;font-size:12.0px;line-height:14.40px;color:#dfeaf0;font-weight:400;font-family:&quot;Liberation Serif&quot;,serif;letter-spacing:0.3px">Items2</div>
<div style="left:2px;top:846px;width:201px;height:24px;background:#dadada"></div>
<div style="left:203px;top:152px;width:1395px;height:718px;background:#f8f8f8"></div>
<div style="left:1595.6px;top:152px;width:2px;height:719px;background:#dcdcdc"></div>
<div style="left:1597.6px;top:152px;width:2.4px;height:719px;background:#f3f3f3"></div>
<div style="left:203px;top:152px;width:1395px;height:1.5px;background:#dadada"></div>
<div class="t" style="left:206px;top:158.46px;font-size:10.9px;line-height:13.08px;color:#cfcfd4;font-weight:400;">Matchcode</div>
<div style="left:203px;top:174.6px;width:1394px;height:1px;background:#e6e6e6"></div>
<div style="left:203px;top:175.6px;width:1394px;height:21px;background:#c4ddf0"></div>
<div class="t" style="left:206px;top:179.83px;font-size:10.45px;line-height:12.54px;color:#f2f7fb;font-weight:400;">Bottom Slat Premium Alu beige 3 m</div>
<div style="left:203px;top:196.6px;width:1394px;height:21px;background:#f7f7f7"></div>
<div style="left:203px;top:196.6px;width:1394px;height:1px;background:#e4e4e4"></div>
<div class="t" style="left:206px;top:200.83px;font-size:10.45px;line-height:12.54px;color:#c8c8c8;font-weight:400;">Bottom Slat Premium Alu beige 6 m</div>
<div style="left:203px;top:217.6px;width:1394px;height:21px;background:#c4ddf0"></div>
<div class="t" style="left:206px;top:221.83px;font-size:10.45px;line-height:12.54px;color:#f2f7fb;font-weight:400;">Bottom Slat Premium Alu blank 3 m</div>
<div style="left:203px;top:238.6px;width:1394px;height:21px;background:#f7f7f7"></div>
<div style="left:203px;top:238.6px;width:1394px;height:1px;background:#e4e4e4"></div>
<div class="t" style="left:206px;top:242.83px;font-size:10.45px;line-height:12.54px;color:#c8c8c8;font-weight:400;">Bottom Slat Premium Alu blank 6 m</div>
<div style="left:203px;top:259.6px;width:1394px;height:21px;background:#c4ddf0"></div>
<div class="t" style="left:206px;top:263.83px;font-size:10.45px;line-height:12.54px;color:#f2f7fb;font-weight:400;">Bottom Slat Premium Alu green 3 m</div>
<div style="left:203px;top:280.6px;width:1394px;height:21px;background:#f7f7f7"></div>
<div style="left:203px;top:280.6px;width:1394px;height:1px;background:#e4e4e4"></div>
<div class="t" style="left:206px;top:284.83px;font-size:10.45px;line-height:12.54px;color:#c8c8c8;font-weight:400;">Bottom Slat Premium Alu green 6 m</div>
<div style="left:203px;top:301.6px;width:1394px;height:21px;background:#c4ddf0"></div>
<div class="t" style="left:206px;top:305.83px;font-size:10.45px;line-height:12.54px;color:#f2f7fb;font-weight:400;">Bottom Slat Premium Alu grey 3 m</div>
<div style="left:203px;top:322.6px;width:1394px;height:21px;background:#f7f7f7"></div>
<div style="left:203px;top:322.6px;width:1394px;height:1px;background:#e4e4e4"></div>
<div class="t" style="left:206px;top:326.83px;font-size:10.45px;line-height:12.54px;color:#c8c8c8;font-weight:400;">Bottom Slat Premium Alu grey 6 m</div>
<div style="left:203px;top:343.6px;width:1394px;height:21px;background:#c4ddf0"></div>
<div class="t" style="left:206px;top:347.83px;font-size:10.45px;line-height:12.54px;color:#f2f7fb;font-weight:400;">Bottom Slat Premium Alu white 3 m</div>
<div style="left:203px;top:364.6px;width:1394px;height:21px;background:#f7f7f7"></div>
<div style="left:203px;top:364.6px;width:1394px;height:1px;background:#e4e4e4"></div>
<div class="t" style="left:206px;top:368.83px;font-size:10.45px;line-height:12.54px;color:#c8c8c8;font-weight:400;">Bottom Slat Premium Alu white 6 m</div>
<div style="left:203px;top:385.6px;width:1394px;height:1px;background:#e4e4e4"></div>
<div style="left:203px;top:838.6px;width:1393px;height:2px;background:#e6e6e6"></div>
<div style="left:203px;top:840.6px;width:1393px;height:30px;background:#f4f4f4"></div>
<div style="left:210.5px;top:848px;width:14px;height:13px;background:#f8f8f8;border:1px solid #e2e2e2"></div>
<svg style="position:absolute;left:212px;top:850px" width="11" height="10" viewBox="0 0 11 10"><path d="M2 5 L4.5 7.5 L9 2" fill="none" stroke="#d0d0d0" stroke-width="1.2"/></svg>
<div class="t" style="left:1185px;width:400px;text-align:right;top:850.26px;font-size:10.4px;line-height:12.48px;color:#cbcbcb;font-weight:400;">Edit Filter</div>
<div style="left:0px;top:869.8px;width:1598px;height:2.2px;background:#dcdcdc"></div>
<div style="left:202px;top:152px;width:2px;height:718px;background:#cbcbcb"></div>
<div style="left:0px;top:871px;width:1600px;height:29px;background:#f5f5f5"></div>
<div style="left:3px;top:871px;width:115px;height:24px;background:#f8f8f8"></div>
<div style="left:2px;top:893.5px;width:116px;height:3.6px;background:#c2c2c2"></div>
<div class="t" style="left:14px;top:876.88px;font-size:11.2px;line-height:13.44px;color:#444452;font-weight:400;">Article [30 / 14373]</div>
<svg style="position:absolute;left:1584px;top:882px" width="10" height="8" viewBox="0 0 10 8"><path d="M1 1.5 H7 L4 5 Z" fill="#333"/></svg>
<div style="left:405.2px;top:149px;width:791.8px;height:599.5px;background:rgba(0,0,0,0.10);filter:blur(2px)"></div>
<div style="left:407.2px;top:151px;width:785.8px;height:593.5px;background:#f5f5f5;border:1.6px solid #b8b8b8"></div>
<div style="left:408.2px;top:152px;width:783.8px;height:30px;background:#ffffff"></div>
<svg style="position:absolute;left:414px;top:155px" width="20" height="20" viewBox="0 0 20 20"><circle cx="9.5" cy="10" r="7.5" fill="none" stroke="#c0c0c0" stroke-width="1.4"/><path d="M8 6.5 Q10.5 6 10.5 8 V13.5 M8 13.5 H12" fill="none" stroke="#c0c0c0" stroke-width="1.3"/></svg>
<div class="t" style="left:437.4px;top:157.86px;font-size:11.9px;line-height:14.28px;color:#a8a8b8;font-weight:400;">Modify variants...</div>
<svg style="position:absolute;left:1170px;top:158px" width="14" height="14" viewBox="0 0 14 14"><path d="M2 2 L12 12 M12 2 L2 12" stroke="#8a8a8a" stroke-width="1.2"/></svg>
<div style="left:420.4px;top:199px;width:758.6px;height:38px;border:1.6px solid #dedede"></div>
<div style="left:426.4px;top:195px;width:76px;height:8px;background:#f5f5f5"></div>
<div class="t" style="left:430px;top:192.98px;font-size:11.7px;line-height:14.04px;color:#1a1a1a;font-weight:700;">Data source</div>
<div class="t" style="left:430px;top:213.98px;font-size:11.7px;line-height:14.04px;color:#1a1a1a;font-weight:700;">Source</div>
<div style="left:1074px;top:210px;width:99.4px;height:20.6px;background:#dcdcdc;border:1.5px solid #c6c6c6"></div>
<div class="t" style="left:923.7px;width:400px;text-align:center;top:213.76px;font-size:10.9px;line-height:13.08px;color:#222;font-weight:400;">Select source</div>
<div style="left:421px;top:250.4px;width:758.6px;height:370px;border:1.6px solid #dedede"></div>
<div style="left:427px;top:246.4px;width:38px;height:8px;background:#f5f5f5"></div>
<div class="t" style="left:430px;top:244.38px;font-size:11.7px;line-height:14.04px;color:#1a1a1a;font-weight:700;">Fields</div>
<div style="left:422.6px;top:261px;width:754.2px;height:359px;background:#fff;border:1.8px solid #c4c4c4"></div>
<div style="left:424.40000000000003px;top:262.8px;width:750.6px;height:41.8px;background:#ececec"></div>
<div style="left:436.6px;top:274.4px;width:350.8px;height:18.8px;background:#fff;border:1.5px solid #c8c8c8"></div>
<div class="t" style="left:441px;top:277.46px;font-size:10.9px;line-height:13.08px;color:#8a8a8a;font-weight:400;">Enter text to search...</div>
<svg style="position:absolute;left:774px;top:281px" width="10" height="6" viewBox="0 0 10 6"><path d="M1 1 H9 L5 5 Z" fill="#999"/></svg>
<div style="left:790.8px;top:274.4px;width:60.4px;height:18.8px;background:#fff;border:1.5px solid #c8c8c8"></div>
<div class="t" style="left:621px;width:400px;text-align:center;top:277.46px;font-size:10.9px;line-height:13.08px;color:#333;font-weight:400;">Find</div>
<div style="left:856.2px;top:274.4px;width:60.8px;height:18.8px;background:#fff;border:1.5px solid #c8c8c8"></div>
<div class="t" style="left:686.6px;width:400px;text-align:center;top:277.46px;font-size:10.9px;line-height:13.08px;color:#333;font-weight:400;">Clear</div>
<div style="left:424.40000000000003px;top:304.6px;width:750.6px;height:24px;background:#f8f8f8"></div>
<div style="left:424.40000000000003px;top:304.6px;width:750.6px;height:1.5px;background:#e2e2e2"></div>
<div style="left:424.40000000000003px;top:327.40000000000003px;width:750.6px;height:1.6px;background:#e0e0e0"></div>
<div style="left:445.5px;top:305.6px;width:1.4px;height:22.6px;background:#dcdcdc"></div>
<div style="left:468.6px;top:305.6px;width:1.4px;height:22.6px;background:#dcdcdc"></div>
<div style="left:805px;top:305.6px;width:1.4px;height:22.6px;background:#dcdcdc"></div>
<div style="left:1159px;top:305.6px;width:1.4px;height:22.6px;background:#dcdcdc"></div>
<div class="t" style="left:472px;top:311.46px;font-size:10.9px;line-height:13.08px;color:#404060;font-weight:400;">Field</div>
<div class="t" style="left:808.4px;top:311.46px;font-size:10.9px;line-height:13.08px;color:#404060;font-weight:400;">Value</div>
<svg style="position:absolute;left:789px;top:313px" width="12" height="8" viewBox="0 0 12 8"><path d="M1 7 L6 1.5 L11 7 Z" fill="#8a8a8a"/></svg>
<div style="left:424.20000000000005px;top:330px;width:734.8px;height:288.20000000000005px;overflow:hidden">
<div style="left:19.799999999999976px;top:20px;width:715px;height:1.4px;background:#e6e6e6"></div>
<div style="left:25.799999999999976px;top:3.4px;width:15.4px;height:13.6px;background:#fff;border:1.8px solid #c6c6c6"></div>
<div class="t" style="left:47.799999999999976px;top:3.96px;font-size:10.9px;line-height:13.08px;color:#3a3a58">individual_text_1</div>
<div style="left:19.799999999999976px;top:41px;width:715px;height:1.4px;background:#e6e6e6"></div>
<div style="left:25.799999999999976px;top:24.4px;width:15.4px;height:13.6px;background:#fff;border:1.8px solid #c6c6c6"></div>
<div class="t" style="left:47.799999999999976px;top:24.96px;font-size:10.9px;line-height:13.08px;color:#3a3a58">individual_text_2</div>
<div style="left:19.799999999999976px;top:62px;width:715px;height:1.4px;background:#e6e6e6"></div>
<div style="left:25.799999999999976px;top:45.4px;width:15.4px;height:13.6px;background:#fff;border:1.8px solid #c6c6c6"></div>
<div class="t" style="left:47.799999999999976px;top:45.96px;font-size:10.9px;line-height:13.08px;color:#3a3a58">individual_text_3</div>
<div style="left:19.799999999999976px;top:83px;width:715px;height:1.4px;background:#e6e6e6"></div>
<div style="left:25.799999999999976px;top:66.4px;width:15.4px;height:13.6px;background:#fff;border:1.8px solid #c6c6c6"></div>
<div class="t" style="left:47.799999999999976px;top:66.96px;font-size:10.9px;line-height:13.08px;color:#3a3a58">individual_text_4</div>
<div style="left:19.799999999999976px;top:104px;width:715px;height:1.4px;background:#e6e6e6"></div>
<div style="left:25.799999999999976px;top:87.4px;width:15.4px;height:13.6px;background:#fff;border:1.8px solid #c6c6c6"></div>
<div class="t" style="left:47.799999999999976px;top:87.96px;font-size:10.9px;line-height:13.08px;color:#3a3a58">individual_text_5</div>
<div style="left:19.799999999999976px;top:105px;width:361px;height:21px;background:#c9e0f2"></div>
<div style="left:19.799999999999976px;top:125px;width:715px;height:1.4px;background:#e6e6e6"></div>
<div style="left:25.799999999999976px;top:108.4px;width:15.4px;height:13.6px;background:#fff;border:1.8px solid #c6c6c6"></div>
<svg style="position:absolute;left:27.799999999999976px;top:110px" width="11" height="10"><path d="M1.5 5 L4 7.5 L9.5 2" fill="none" stroke="#555" stroke-width="1.3"/></svg>
<svg style="position:absolute;left:4.799999999999978px;top:109px" width="14" height="12"><path d="M2 10 L9 3 L11 5 L4 12 Z" fill="#777"/></svg>
<div style="left:550.8px;top:108.5px;width:15px;height:14px;background:#fff;border:1.4px solid #c2c2c2"></div>
<svg style="position:absolute;left:552.8px;top:110px" width="11" height="10"><path d="M1.5 5 L4 7.5 L9.5 2" fill="none" stroke="#666" stroke-width="1.2"/></svg>
<div class="t" style="left:47.799999999999976px;top:108.96px;font-size:10.9px;line-height:13.08px;color:#3a3a58">item_disabled</div>
<div style="left:19.799999999999976px;top:146px;width:715px;height:1.4px;background:#e6e6e6"></div>
<div style="left:25.799999999999976px;top:129.4px;width:15.4px;height:13.6px;background:#fff;border:1.8px solid #c6c6c6"></div>
<div class="t" style="left:47.799999999999976px;top:129.96px;font-size:10.9px;line-height:13.08px;color:#3a3a58">item_number</div>
<div style="left:19.799999999999976px;top:167px;width:715px;height:1.4px;background:#e6e6e6"></div>
<div style="left:25.799999999999976px;top:150.4px;width:15.4px;height:13.6px;background:#fff;border:1.8px solid #c6c6c6"></div>
<div class="t" style="left:47.799999999999976px;top:150.96px;font-size:10.9px;line-height:13.08px;color:#3a3a58">length_deduction</div>
<div class="t" style="left:631.8px;width:100px;text-align:right;top:150.96px;font-size:10.9px;line-height:13.08px;color:#5a3a5c">0</div>
<div style="left:19.799999999999976px;top:188px;width:715px;height:1.4px;background:#e6e6e6"></div>
<div style="left:25.799999999999976px;top:171.4px;width:15.4px;height:13.6px;background:#fff;border:1.8px solid #c6c6c6"></div>
<div class="t" style="left:47.799999999999976px;top:171.96px;font-size:10.9px;line-height:13.08px;color:#3a3a58">longtext</div>
<div style="left:19.799999999999976px;top:209px;width:715px;height:1.4px;background:#e6e6e6"></div>
<div style="left:25.799999999999976px;top:192.4px;width:15.4px;height:13.6px;background:#fff;border:1.8px solid #c6c6c6"></div>
<div class="t" style="left:47.799999999999976px;top:192.96px;font-size:10.9px;line-height:13.08px;color:#3a3a58">manufacturer_number</div>
<div style="left:19.799999999999976px;top:230px;width:715px;height:1.4px;background:#e6e6e6"></div>
<div style="left:25.799999999999976px;top:213.4px;width:15.4px;height:13.6px;background:#fff;border:1.8px solid #c6c6c6"></div>
<div class="t" style="left:47.799999999999976px;top:213.96px;font-size:10.9px;line-height:13.08px;color:#3a3a58">max_drop</div>
<div class="t" style="left:631.8px;width:100px;text-align:right;top:213.96px;font-size:10.9px;line-height:13.08px;color:#5a3a5c">0</div>
<div style="left:19.799999999999976px;top:251px;width:715px;height:1.4px;background:#e6e6e6"></div>
<div style="left:25.799999999999976px;top:234.4px;width:15.4px;height:13.6px;background:#fff;border:1.8px solid #c6c6c6"></div>
<div class="t" style="left:47.799999999999976px;top:234.96px;font-size:10.9px;line-height:13.08px;color:#3a3a58">measurement_line</div>
<div style="left:19.799999999999976px;top:272px;width:715px;height:1.4px;background:#e6e6e6"></div>
<div style="left:25.799999999999976px;top:255.4px;width:15.4px;height:13.6px;background:#fff;border:1.8px solid #c6c6c6"></div>
<div class="t" style="left:47.799999999999976px;top:255.96px;font-size:10.9px;line-height:13.08px;color:#3a3a58">min_markup</div>
<div class="t" style="left:631.8px;width:100px;text-align:right;top:255.96px;font-size:10.9px;line-height:13.08px;color:#5a3a5c">0</div>
<div style="left:19.799999999999976px;top:293px;width:715px;height:1.4px;background:#e6e6e6"></div>
<div style="left:25.799999999999976px;top:276.4px;width:15.4px;height:13.6px;background:#fff;border:1.8px solid #c6c6c6"></div>
<div class="t" style="left:47.799999999999976px;top:276.96px;font-size:10.9px;line-height:13.08px;color:#3a3a58">min_rouse</div>
<div class="t" style="left:631.8px;width:100px;text-align:right;top:276.96px;font-size:10.9px;line-height:13.08px;color:#5a3a5c">0</div>
</div>
<div style="left:805px;top:330px;width:1.6px;height:288.2px;background:#dadada"></div>
<div style="left:444.6px;top:330px;width:1.2px;height:288.2px;background:#ececec"></div>
<div style="left:468px;top:330px;width:1.2px;height:288.2px;background:#ececec"></div>
<div style="left:1160px;top:329px;width:15px;height:289.2px;background:#efefef"></div>
<div style="left:1160.4px;top:330.6px;width:14px;height:17px;background:#fff;border:1px solid #dadada"></div>
<svg style="position:absolute;left:1162px;top:333px" width="10" height="10" viewBox="0 0 10 10"><path d="M2 7 L5 3 L8 7 Z" fill="#888"/></svg>
<div style="left:1160px;top:425px;width:14.4px;height:46px;background:#fff;border:1px solid #d6d6d6"></div>
<div style="left:1160.6px;top:601.4px;width:14px;height:16px;background:#fff;border:1px solid #dadada"></div>
<svg style="position:absolute;left:1162px;top:603px" width="10" height="10" viewBox="0 0 10 10"><path d="M2 3 L5 7 L8 3 Z" fill="#888"/></svg>
<div style="left:421.8px;top:634.6px;width:757.6px;height:66.4px;border:1.6px solid #dedede"></div>
<div style="left:427.8px;top:630.6px;width:92px;height:8px;background:#f5f5f5"></div>
<div class="t" style="left:430px;top:628.58px;font-size:11.7px;line-height:14.04px;color:#1a1a1a;font-weight:700;">Target records</div>
<svg style="position:absolute;left:427px;top:650px" width="14" height="14" viewBox="0 0 14 14"><circle cx="7" cy="7" r="5.8" fill="#fff" stroke="#b8b8b8" stroke-width="1.3"/><circle cx="7" cy="7" r="2.8" fill="#7a7a7a"/></svg>
<div class="t" style="left:444px;top:650.46px;font-size:10.9px;line-height:13.08px;color:#1a1a1a;font-weight:400;">modify selected records (5)</div>
<svg style="position:absolute;left:427px;top:673.6px" width="14" height="14" viewBox="0 0 14 14"><circle cx="7" cy="7" r="5.8" fill="#fff" stroke="#b8b8b8" stroke-width="1.3"/></svg>
<div class="t" style="left:444px;top:674.06px;font-size:10.9px;line-height:13.08px;color:#1a1a1a;font-weight:400;">modify shown records (10)</div>
<div style="left:975px;top:708.6px;width:97.4px;height:21px;background:#dcdcdc;border:2px solid #3d8ee0"></div>
<div class="t" style="left:823.7px;width:400px;text-align:center;top:712.56px;font-size:10.9px;line-height:13.08px;color:#1a1a1a;font-weight:400;">Save</div>
<div style="left:1080.6px;top:708.6px;width:98.2px;height:21px;background:#dcdcdc;border:1.5px solid #d0d0d0"></div>
<div class="t" style="left:929.7px;width:400px;text-align:center;top:712.56px;font-size:10.9px;line-height:13.08px;color:#1a1a1a;font-weight:400;">Abort</div>
</div></body></html>
